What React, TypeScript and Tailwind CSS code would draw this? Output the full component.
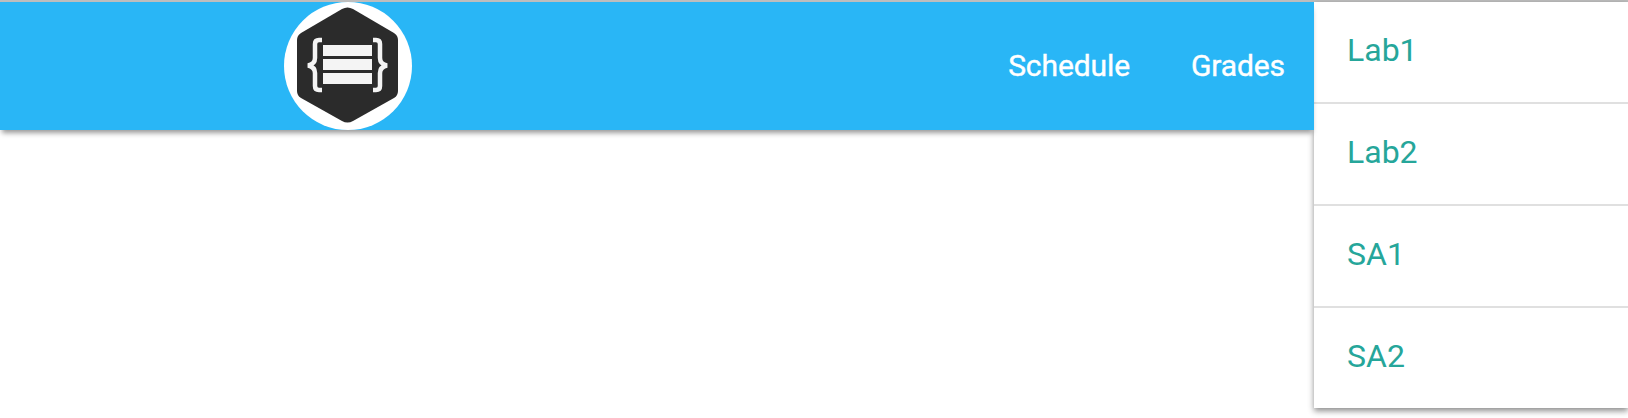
const items = ["Lab1", "Lab2", "SA1", "SA2"];

function Logo() {
  return (
    <div className="flex h-[128px] w-[128px] items-center justify-center rounded-full bg-white">
      <svg className="blur-[0.4px]" width="128" height="128" viewBox="0 0 128 128" fill="none">
        <path
          d="M58 7 Q63.5 4 69 7 L110 31 Q114 33.5 114 38 L114 89 Q114 93.5 110 96 L69 119 Q63.5 122 58 119 L17 96 Q13 93.5 13 89 L13 38 Q13 33.5 17 31 Z"
          fill="#2b2b2b"
        />
        <rect x="39" y="43" width="49" height="11" fill="#f4f4f4" />
        <rect x="39" y="57" width="49" height="11" fill="#f4f4f4" />
        <rect x="39" y="71" width="49" height="11" fill="#f4f4f4" />
        <path
          d="M38 38 H35 Q31 38 31 42 V56 Q31 62 24 63.5 Q31 65 31 71 V84 Q31 88 35 88 H38"
          stroke="#f4f4f4"
          strokeWidth="4.5"
        />
        <path
          d="M89 38 H92 Q96 38 96 42 V56 Q96 62 103 63.5 Q96 65 96 71 V84 Q96 88 92 88 H89"
          stroke="#f4f4f4"
          strokeWidth="4.5"
        />
      </svg>
    </div>
  );
}

export default function App() {
  return (
    <div className="relative h-[418px] w-full overflow-hidden bg-white font-['Roboto',sans-serif]">
      <div className="h-[2px] bg-[#bdbdbd]" />
      <nav className="relative z-10 mr-[314px] flex h-[128px] items-center bg-[#29b6f6] pl-[284px] pr-[29px] shadow-[0_5px_5px_-2px_rgba(0,0,0,0.4)]">
        <Logo />
        <div className="ml-auto flex gap-[61px] pb-[2px] text-[30px] tracking-[-0.1px] text-white [-webkit-text-stroke:0.4px_white]">
          <a>Schedule</a>
          <a>Grades</a>
        </div>
      </nav>
      <ul className="absolute right-0 top-[2px] w-[314px] bg-white shadow-[0_3px_6px_rgba(0,0,0,0.45)]">
        {items.map((label, i) => (
          <li
            key={label}
            className={`flex items-center pb-[4px] pl-[33px] text-[32px] text-[#26a69a] ${
              i < items.length - 1 ? "h-[102px] border-b-2 border-[#e0e0e0]" : "h-[100px]"
            }`}
          >
            {label}
          </li>
        ))}
      </ul>
    </div>
  );
}
